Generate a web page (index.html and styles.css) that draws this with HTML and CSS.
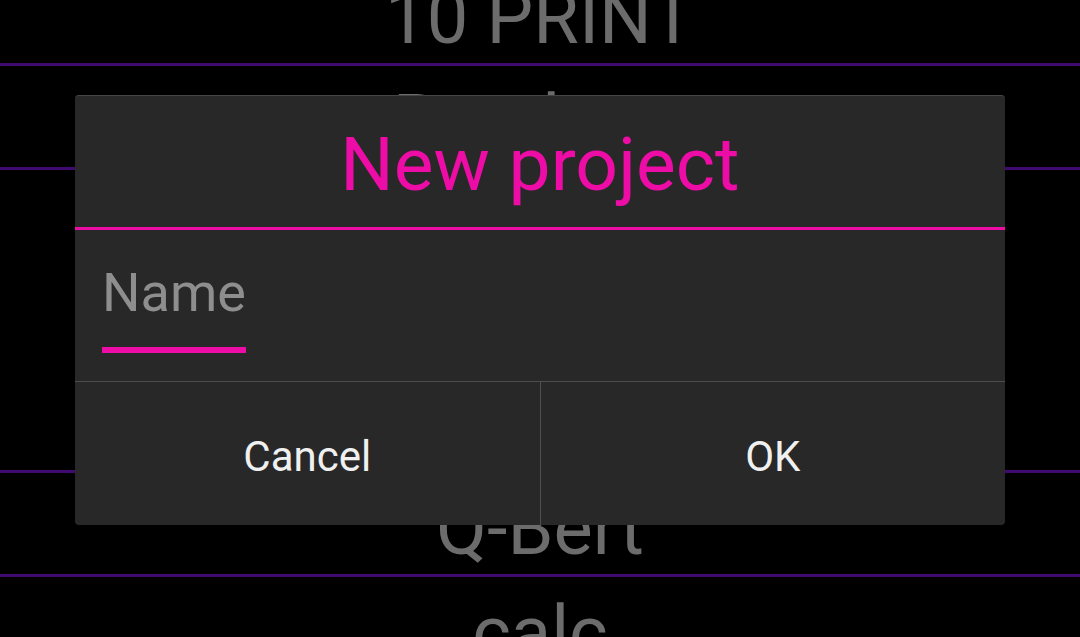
FILE: index.html
```html
<!DOCTYPE html>
<html>
<head>
<meta charset="utf-8">
<link rel="stylesheet" href="styles.css">
</head>
<body>
<div class="screen">
  <ul class="list">
    <li class="item item-first">10 PRINT</li>
    <li class="item">Breakout</li>
    <li class="item item-tall">Pong</li>
    <li class="item">Q-Bert</li>
    <li class="item">calc</li>
  </ul>
  <div class="dialog">
    <div class="dialog-title">New project</div>
    <div class="dialog-body">
      <div class="field">
        <div class="hint">Name</div>
        <div class="underline"></div>
      </div>
    </div>
    <div class="dialog-buttons">
      <div class="btn">Cancel</div>
      <div class="btn btn-right">OK</div>
    </div>
  </div>
</div>
</body>
</html>
```
FILE: styles.css
```css
html, body {
  margin: 0;
  padding: 0;
  background: #000;
}
.screen {
  position: relative;
  width: 1080px;
  height: 637px;
  overflow: hidden;
  background: #000;
  font-family: Roboto, "Liberation Sans", sans-serif;
}
.list {
  list-style: none;
  margin: 0;
  padding: 0;
  display: flex;
  flex-direction: column;
}
.item {
  box-sizing: border-box;
  height: 104px;
  flex: none;
  display: flex;
  align-items: flex-end;
  justify-content: center;
  padding-bottom: 2px;
  border-bottom: 3px solid #400a70;
  color: #6c6c6c;
  font-size: 74px;
  line-height: 87px;
  white-space: nowrap;
}
.item-first {
  height: 66px;
}
.item-tall {
  height: 303px;
}
.dialog {
  position: absolute;
  left: 75px;
  top: 95px;
  width: 930px;
  height: 430px;
  box-sizing: border-box;
  background: #282828;
  border-radius: 4px;
  border-top: 1px solid #454545;
  display: flex;
  flex-direction: column;
}
.dialog-title {
  box-sizing: border-box;
  height: 134px;
  padding-top: 24px;
  border-bottom: 3px solid #ee0ca6;
  color: #ee0ca6;
  font-size: 75px;
  line-height: 88px;
  text-align: center;
}
.dialog-body {
  box-sizing: border-box;
  height: 152px;
  padding: 31px 0 0 27px;
  border-bottom: 1px solid #4e4e4e;
}
.field {
  display: flex;
  flex-direction: column;
  align-items: flex-start;
}
.hint {
  color: #8e8e8e;
  font-size: 54px;
  line-height: 64px;
}
.underline {
  margin-top: 22px;
  width: 144px;
  height: 6px;
  background: #ee0ca6;
}
.dialog-buttons {
  flex: 1;
  display: flex;
}
.btn {
  flex: 1;
  display: flex;
  align-items: center;
  justify-content: center;
  padding-top: 5px;
  color: #f0f0f0;
  font-size: 42px;
  line-height: 49px;
}
.btn-right {
  border-left: 1px solid #4e4e4e;
}
```
